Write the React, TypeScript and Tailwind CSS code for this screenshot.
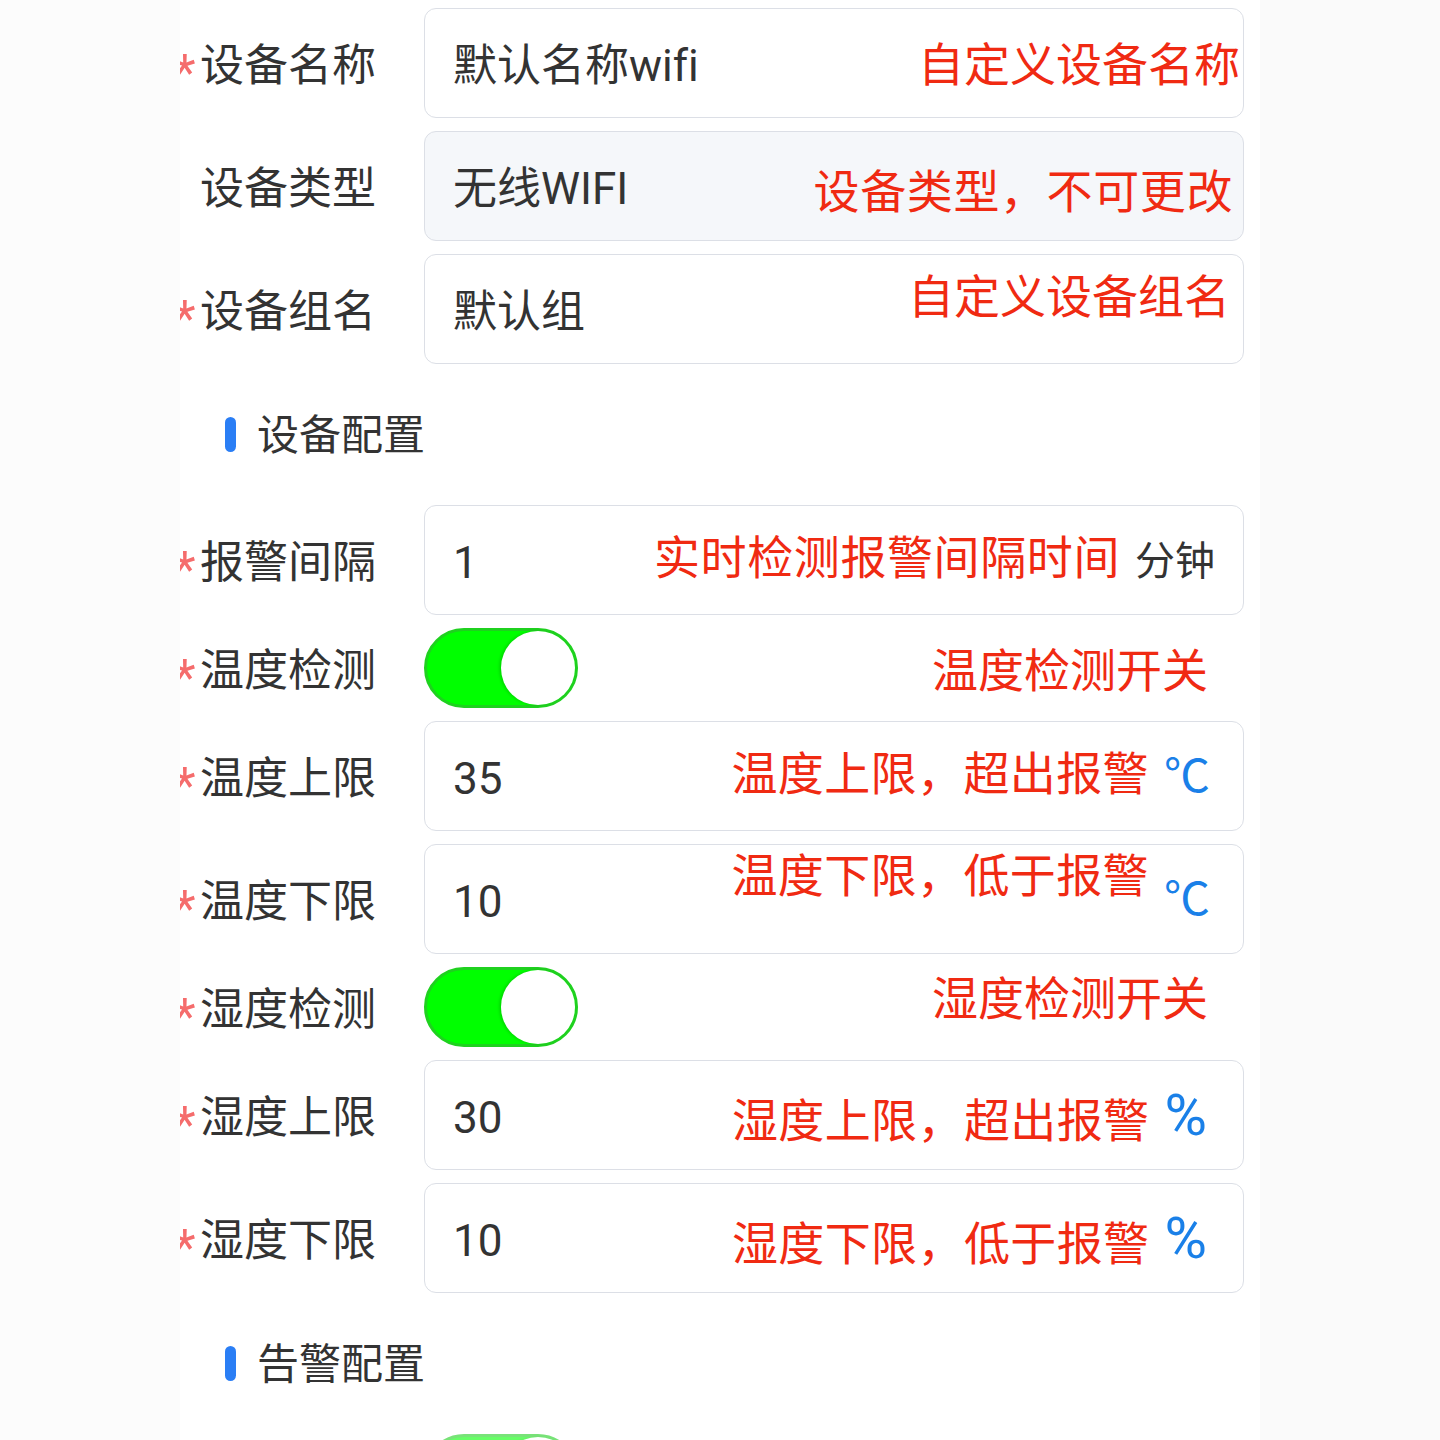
import React from 'react';

type Row =
  | {
      kind: 'input';
      label: string;
      required: boolean;
      value: string;
      disabled?: boolean;
      hint: string;
      hintClass: string;
      unit?: string;
      unitClass?: string;
      padClass: string;
    }
  | { kind: 'switch'; label: string; required: boolean; hint: string; hintClass: string; dim?: boolean }
  | { kind: 'title'; text: string };

const rows: Row[] = [
  { kind: 'input', label: '设备名称', required: true, value: '默认名称wifi', hint: '自定义设备名称', hintClass: 'mt-[4px]', padClass: 'pr-[3px]' },
  { kind: 'input', label: '设备类型', required: false, value: '无线WIFI', disabled: true, hint: '设备类型，不可更改', hintClass: 'mt-[12px] tracking-[0.6px]', padClass: 'pr-[10px]' },
  { kind: 'input', label: '设备组名', required: true, value: '默认组', hint: '自定义设备组名', hintClass: '-mt-[24px]', padClass: 'pr-[13px]' },
  { kind: 'title', text: '设备配置' },
  { kind: 'input', label: '报警间隔', required: true, value: '1', hint: '实时检测报警间隔时间', hintClass: '-mt-[4px] tracking-[0.6px]', unit: '分钟', unitClass: 'text-[40px] text-[#333333] mt-[4px]', padClass: 'pr-[28px]' },
  { kind: 'switch', label: '温度检测', required: true, hint: '温度检测开关', hintClass: 'mt-[6px]' },
  { kind: 'input', label: '温度上限', required: true, value: '35', hint: '温度上限，超出报警', hintClass: '-mt-[4px] tracking-[0.4px]', unit: '℃', unitClass: 'text-[46px] text-[#1a80e8]', padClass: 'pr-[33px]' },
  { kind: 'input', label: '温度下限', required: true, value: '10', hint: '温度下限，低于报警', hintClass: '-mt-[46px] tracking-[0.4px]', unit: '℃', unitClass: 'text-[46px] text-[#1a80e8]', padClass: 'pr-[33px]' },
  { kind: 'switch', label: '湿度检测', required: true, hint: '湿度检测开关', hintClass: '-mt-[16px]' },
  { kind: 'input', label: '湿度上限', required: true, value: '30', hint: '湿度上限，超出报警', hintClass: 'mt-[12px] tracking-[0.4px]', unit: '%', unitClass: 'text-[58px] text-[#1a80e8]', padClass: 'pr-[36px]' },
  { kind: 'input', label: '湿度下限', required: true, value: '10', hint: '湿度下限，低于报警', hintClass: 'mt-[12px] tracking-[0.4px]', unit: '%', unitClass: 'text-[58px] text-[#1a80e8]', padClass: 'pr-[36px]' },
  { kind: 'title', text: '告警配置' },
  { kind: 'switch', label: '', required: false, hint: '', hintClass: '', dim: true },
];

const Label: React.FC<{ text: string; required: boolean }> = ({ text, required }) => (
  <div className="relative w-[244px] shrink-0 pl-[20px] flex items-center text-[44px] leading-none text-[#333333]">
    {required && (
      <span className="absolute left-[-6px] top-1/2 -translate-y-[31%] text-[50px] leading-none text-[#f56c6c]">*</span>
    )}
    <span className="mt-[5px]">{text}</span>
  </div>
);

const Switch: React.FC<{ dim?: boolean }> = ({ dim }) => (
  <div
    className={`w-[154px] h-[80px] rounded-full bg-[#00ff00] border-[3px] border-[#1fd11f] flex items-center justify-end ${dim ? 'opacity-60' : ''}`}
  >
    <div className="w-[74px] h-[74px] rounded-full bg-white shadow-[-2px_0_3px_rgba(0,0,0,0.15)]" />
  </div>
);

export default function App() {
  return (
    <div
      className="flex w-[1440px] h-[1440px] overflow-hidden bg-[#fafafa] [font-variant-ligatures:none]"
      style={{ fontFamily: 'Roboto, "Noto Sans CJK SC", "Noto Sans", sans-serif' }}
    >
      <div className="w-[180px] shrink-0 bg-[#fcfcfc]" />
      <div className="w-[1080px] shrink-0 bg-white overflow-hidden pt-[8px] pr-[16px] flex flex-col gap-[13px]">
        {rows.map((r, i) => {
          if (r.kind === 'title') {
            return (
              <div key={i} className="h-[115px] shrink-0 flex items-center pl-[45px] gap-[21px]">
                <span className="w-[11px] h-[35px] rounded-full bg-[#2a7ef5]" />
                <span className="text-[42px] leading-none text-[#333333] mt-[3px]">{r.text}</span>
              </div>
            );
          }
          if (r.kind === 'switch') {
            return (
              <div key={i} className="h-[80px] shrink-0 flex items-center">
                <Label text={r.label} required={r.required} />
                <div className="flex-1 flex items-center justify-between pr-[36px]">
                  <Switch dim={r.dim} />
                  <span className={`text-[46px] leading-none text-[#f02a12] ${r.hintClass}`}>{r.hint}</span>
                </div>
              </div>
            );
          }
          return (
            <div key={i} className="h-[110px] shrink-0 flex items-center">
              <Label text={r.label} required={r.required} />
              <div
                className={`flex-1 h-full rounded-[12px] border border-[#dcdfe6] flex items-center pl-[28px] ${r.padClass} ${
                  r.disabled ? 'bg-[#f5f7fa]' : 'bg-white'
                }`}
              >
                <span className="text-[44px] leading-none text-[#333333] mt-[5px]">{r.value}</span>
                <span className={`ml-auto text-[46px] leading-none text-[#f02a12] whitespace-nowrap ${r.hintClass}`}>{r.hint}</span>
                {r.unit && <span className={`ml-[15px] leading-none ${r.unitClass}`}>{r.unit}</span>}
              </div>
            </div>
          );
        })}
      </div>
      <div className="flex-1" />
    </div>
  );
}
